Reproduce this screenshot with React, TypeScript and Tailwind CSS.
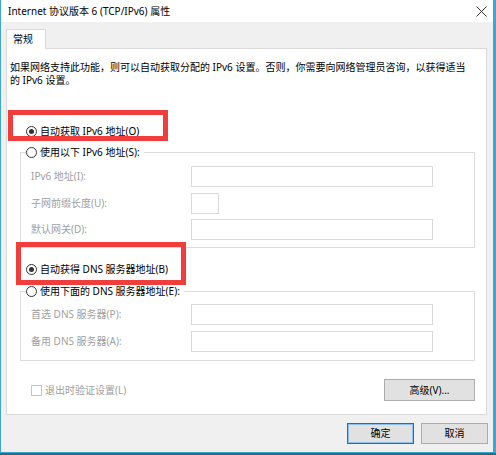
import React from 'react';

const font = '"Noto Sans", "Noto Sans CJK SC", sans-serif';

const Radio: React.FC<{ checked?: boolean; label: string }> = ({ checked, label }) => (
  <div className="flex h-[14px] items-center">
    <span className="flex h-[11px] w-[11px] items-center justify-center rounded-full border border-[#333] bg-white">
      {checked && <span className="h-[5px] w-[5px] rounded-full bg-[#333]" />}
    </span>
    <span className="ml-[3px] whitespace-nowrap text-black">{label}</span>
  </div>
);

const FieldRow: React.FC<{ label: string; inputWidth: string; className?: string }> = ({ label, inputWidth, className }) => (
  <div className={`flex h-[21px] items-center ${className ?? ''}`}>
    <span className="w-[160px] text-[#a0a0a0]">{label}</span>
    <div className={`h-[21px] ${inputWidth} border border-[#d9d9d9] bg-white`} />
  </div>
);

const GroupBox: React.FC<{ legend: string; children: React.ReactNode; className?: string }> = ({ legend, children, className }) => (
  <fieldset className={`ml-[13px] w-[455px] border border-[#dcdcdc] pl-[10px] ${className ?? ''}`}>
    <legend className="-ml-[5px] pr-[4px]">
      <Radio label={legend} />
    </legend>
    {children}
  </fieldset>
);

export default function App() {
  return (
    <div className="h-[455px] w-[496px] bg-[#35677a] text-[10px] leading-[13px]" style={{ fontFamily: font }}>
      <div className="relative flex h-[453px] w-[496px] flex-col border-b border-l border-r-[3px] border-[#3fa6cf]">
        {/* title bar */}
        <div className="flex h-[22px] items-center justify-between bg-white pl-[7px] pr-[5px]">
          <span className="text-[10px] text-black">Internet 协议版本 6 (TCP/IPv6) 属性</span>
          <svg width="11" height="11" viewBox="0 0 11 11" className="mr-[1px]">
            <path d="M0.5 0.5 L10.5 10.5 M10.5 0.5 L0.5 10.5" stroke="#333" strokeWidth="1" />
          </svg>
        </div>

        <div className="flex flex-1 flex-col bg-[#f0f0f0] px-[5px] pt-[7px]">
          {/* tab strip */}
          <div className="relative z-10 -mb-px flex h-[20px] w-[40px] items-start border border-b-0 border-[#d9d9d9] bg-white pl-[6px] pt-[3px]">
            <span className="text-black">常规</span>
          </div>

          {/* page */}
          <div className="relative flex h-[367px] w-[481px] flex-col border border-[#d9d9d9] bg-white">
            <p className="whitespace-nowrap pl-[3px] pt-[12px] leading-[13px] text-black">
              如果网络支持此功能，则可以自动获取分配的 IPv6 设置。否则，你需要向网络管理员咨询，以获得适当
              <br />
              的 IPv6 设置。
            </p>

            <div className="ml-[19px] mt-[37px]">
              <Radio checked label="自动获取 IPv6 地址(O)" />
            </div>

            <GroupBox legend="使用以下 IPv6 地址(S):" className="mt-[7px] pb-[7px]">
              <FieldRow label="IPv6 地址(I):" inputWidth="w-[242px]" className="mt-[7px]" />
              <FieldRow label="子网前缀长度(U):" inputWidth="w-[28px]" className="mt-[6px]" />
              <FieldRow label="默认网关(D):" inputWidth="w-[242px]" className="mt-[5px]" />
            </GroupBox>

            <div className="ml-[19px] mt-[14px]">
              <Radio checked label="自动获得 DNS 服务器地址(B)" />
            </div>

            <GroupBox legend="使用下面的 DNS 服务器地址(E):" className="mt-[8px] pb-[8px]">
              <FieldRow label="首选 DNS 服务器(P):" inputWidth="w-[242px]" className="mt-[6px]" />
              <FieldRow label="备用 DNS 服务器(A):" inputWidth="w-[242px]" className="mt-[6px]" />
            </GroupBox>

            <div className="ml-[24px] mr-[11px] mt-[18px] flex h-[22px] items-center justify-between">
              <div className="flex items-center">
                <span className="h-[11px] w-[11px] border border-[#c4c4c4] bg-white" />
                <span className="ml-[3px] text-[#a0a0a0]">退出时验证设置(L)</span>
              </div>
              <button className="h-[22px] w-[91px] border border-[#adadad] bg-[#e1e1e1] text-black">高级(V)...</button>
            </div>

            {/* highlight frames */}
            <div className="pointer-events-none absolute left-[1px] top-[61px] h-[31px] w-[160px] border-[5px] border-[#f23d3d]" />
            <div className="pointer-events-none absolute left-[9px] top-[193px] h-[43px] w-[170px] border-[5px] border-[#f23d3d]" />
          </div>

          {/* dialog buttons */}
          <div className="mt-[8px] flex justify-end gap-[7px]">
            <button className="h-[21px] w-[67px] border border-[#0078d7] bg-[#e1e1e1] text-black shadow-[inset_0_0_0_1px_#8ec0ef]">确定</button>
            <button className="h-[21px] w-[67px] border border-[#adadad] bg-[#e1e1e1] text-black">取消</button>
          </div>
        </div>
      </div>
    </div>
  );
}
